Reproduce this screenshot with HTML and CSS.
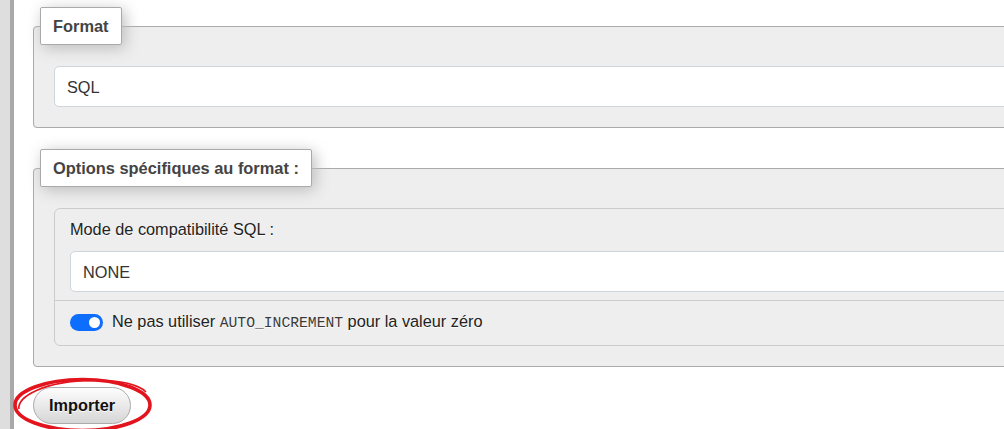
FILE: index.html
```html
<!DOCTYPE html>
<html lang="fr">
<head>
<meta charset="utf-8">
<title>Importer</title>
<link rel="stylesheet" href="styles.css">
</head>
<body>
<div class="page">
  <div class="rail"></div>
  <main class="content">
    <form class="import-form" onsubmit="return false">
      <fieldset class="box box-format">
        <legend>Format</legend>
        <select class="field"><option>SQL</option></select>
      </fieldset>
      <fieldset class="box box-options">
        <legend>Options spécifiques au format :</legend>
        <div class="card">
          <div class="card-item">
            <label class="field-label">Mode de compatibilité SQL :</label>
            <select class="field"><option>NONE</option></select>
          </div>
          <div class="card-item card-item-sep">
            <label class="switch-row">
              <span class="switch"><span class="knob"></span></span>
              <span>Ne pas utiliser <code>AUTO_INCREMENT</code> pour la valeur zéro</span>
            </label>
          </div>
        </div>
      </fieldset>
      <div class="actions">
        <button class="btn" type="submit">Importer</button>
        <svg class="annot" width="140" height="56" viewBox="0 0 140 56" aria-hidden="true">
          <ellipse cx="69.5" cy="28" rx="67.5" ry="25.5" fill="none" stroke="#e2141e" stroke-width="3.6"/>
          <path d="M6 32 C 4 20, 30 4, 80 3.4 C 108 3.2, 126 8, 133 15" fill="none" stroke="#e2141e" stroke-width="1.6"/>
        </svg>
      </div>
    </form>
  </main>
</div>
</body>
</html>
```
FILE: styles.css
```css
html, body {
  margin: 0;
  padding: 0;
  overflow: hidden;
  background: #fff;
}

body {
  font-family: "Liberation Sans", Arial, sans-serif;
  font-size: 16.3px;
  line-height: 24px;
  color: #222;
}

.page {
  display: flex;
  min-height: 100vh;
}

.rail {
  flex: 0 0 10px;
  background: #dedede;
  border-right: 4px solid #a9a9a9;
}

.content {
  flex: 1;
  min-width: 0;
  padding: 7px 0 0 19px;
}

.box {
  margin: 0 -300px 21px 0;
  padding: 21px 20px 20px 20px;
  border: 1px solid #aaa;
  border-radius: 4px;
  background: #eee;
  text-shadow: 0 1px 0 #fff;
  min-width: 0;
}

.box-options {
  margin-bottom: 20px;
}

.box legend {
  margin-left: -14px;
  padding: 6px 12px;
  border: 1px solid #aaa;
  border-radius: 2px;
  background: #fff;
  box-shadow: 3px 3px 15px #bbb;
  font-size: 16.4px;
  font-weight: bold;
  color: #444;
  line-height: 24px;
}

.field {
  display: block;
  box-sizing: border-box;
  width: 100%;
  height: 41px;
  margin: 0;
  padding: 0 12px;
  appearance: none;
  -webkit-appearance: none;
  background: #fff;
  border: 1px solid #cfd5dc;
  border-radius: 5px;
  font-family: "Liberation Sans", Arial, sans-serif;
  font-size: 16.3px;
  color: #333;
  text-shadow: none;
}

.card {
  border: 1px solid #cccccc;
  border-radius: 6px;
  background: #eee;
}

.card-item {
  padding: 8px 15px;
}

.card-item-sep {
  border-top: 1px solid #cccccc;
}

.field-label {
  display: block;
  margin-bottom: 10px;
  line-height: 24px;
  color: #222;
}

.switch-row {
  display: flex;
  align-items: center;
  gap: 9px;
  min-height: 24px;
  margin-bottom: 2px;
  color: #222;
}

.switch {
  display: flex;
  justify-content: flex-end;
  align-items: center;
  box-sizing: border-box;
  width: 33px;
  height: 17px;
  padding: 0 3px;
  border-radius: 9px;
  background: #0d6efd;
  flex: 0 0 auto;
}

.knob {
  width: 11px;
  height: 11px;
  border-radius: 50%;
  background: #fff;
}

code {
  font-family: "Liberation Mono", "DejaVu Sans Mono", monospace;
  font-size: 14.7px;
  color: #3a3a3a;
}

.actions {
  position: relative;
  display: flex;
}

.btn {
  height: 37px;
  padding: 0 15px;
  border: 1px solid #aaa;
  border-radius: 20px;
  background: linear-gradient(#fdfdfd, #d6d6d6);
  font-family: "Liberation Sans", Arial, sans-serif;
  font-size: 16.3px;
  font-weight: bold;
  color: #111;
  text-shadow: 0 1px 0 #fff;
  cursor: pointer;
}

.annot {
  position: absolute;
  left: -20px;
  top: -10px;
  pointer-events: none;
}
```
